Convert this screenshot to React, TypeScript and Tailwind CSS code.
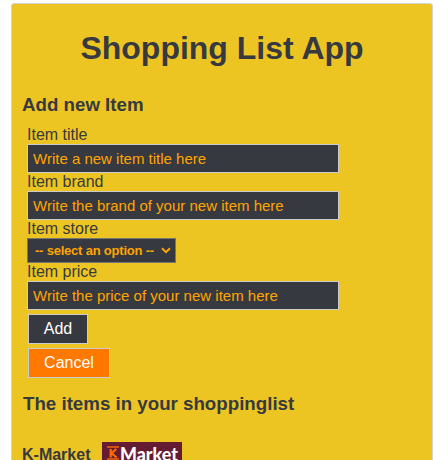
import React from "react";

function Field({ label, placeholder }: { label: string; placeholder: string }) {
  return (
    <label className="block leading-[18px]">
      <span className="block h-[18px]">{label}</span>
      <input
        type="text"
        placeholder={placeholder}
        className="block h-[29px] w-[312px] rounded-none border border-[#cccccc] bg-[#373940] px-[5px] text-[15px] text-[#ffa500] outline-none placeholder:text-[#ffa500]"
      />
    </label>
  );
}

function StoreLogo() {
  return (
    <svg width="80" height="40" viewBox="0 0 80 40" className="block shrink-0">
      <rect width="80" height="40" fill="#651c32" />
      <rect x="5" y="4.3" width="12" height="1.4" fill="#ff6900" />
      <rect x="5" y="16.3" width="12" height="1.4" fill="#ff6900" />
      <path d="M8.7 7V15.5M14.3 7 9.5 11.2 14.6 15.5" fill="none" stroke="#ff6900" strokeWidth="2.2" />
      <text x="18" y="18.5" textLength="58" lengthAdjust="spacingAndGlyphs" fontFamily="Lato, sans-serif" fontWeight="900" fontSize="19.5" fill="#ffffff">Market</text>
    </svg>
  );
}

export default function App() {
  return (
    <div className="h-[460px] overflow-hidden bg-white pl-[11px] pt-[3px] font-['Liberation_Sans',Arial,sans-serif] text-base text-[#373940]">
      <main className="h-[500px] w-[422px] rounded-[3px] border border-[#d3d3d3] bg-[#edc522] px-[10px]">
        <h1 className="pt-[24px] text-center text-[32px] leading-[40px] font-bold">Shopping List App</h1>
        <h2 className="mt-[25px] text-[18.72px] leading-[24px] font-bold">Add new Item</h2>
        <form className="mt-[9px] pl-[5px]">
          <Field label="Item title" placeholder="Write a new item title here" />
          <Field label="Item brand" placeholder="Write the brand of your new item here" />
          <label className="block leading-[18px]">
            <span className="block h-[18px]">Item store</span>
            <span className="relative block h-[25px] w-[149px]">
              <select className="block h-full w-full appearance-none rounded-none border border-[#767676] bg-[#373940] pl-[7px] text-[13px] font-bold tracking-[-0.21px] text-[#ffa500]">
                <option>-- select an option --</option>
              </select>
              <svg className="pointer-events-none absolute top-[9px] right-[5px]" width="10" height="7" viewBox="0 0 10 7" fill="none" stroke="#ffa500" strokeWidth="2">
                <path d="M1 1.2 5 5.2 9 1.2" />
              </svg>
            </span>
          </label>
          <Field label="Item price" placeholder="Write the price of your new item here" />
          <div className="flex flex-col items-start gap-[4px] pt-[4px] pl-px">
            <button type="button" className="h-[30px] w-[60px] border border-[#cccccc] bg-[#373940] text-white">Add</button>
            <button type="button" className="h-[30px] w-[82px] border border-[#cccccc] bg-[#ff7800] text-white">Cancel</button>
          </div>
        </form>
        <h2 className="mt-[14px] pl-px text-[18.72px] leading-[24px] font-bold">The items in your shoppinglist</h2>
        <section className="mt-[26px] flex items-start">
          <h3 className="w-[80px] pt-[4px] leading-[18px] font-bold">K-Market</h3>
          <StoreLogo />
        </section>
      </main>
    </div>
  );
}
